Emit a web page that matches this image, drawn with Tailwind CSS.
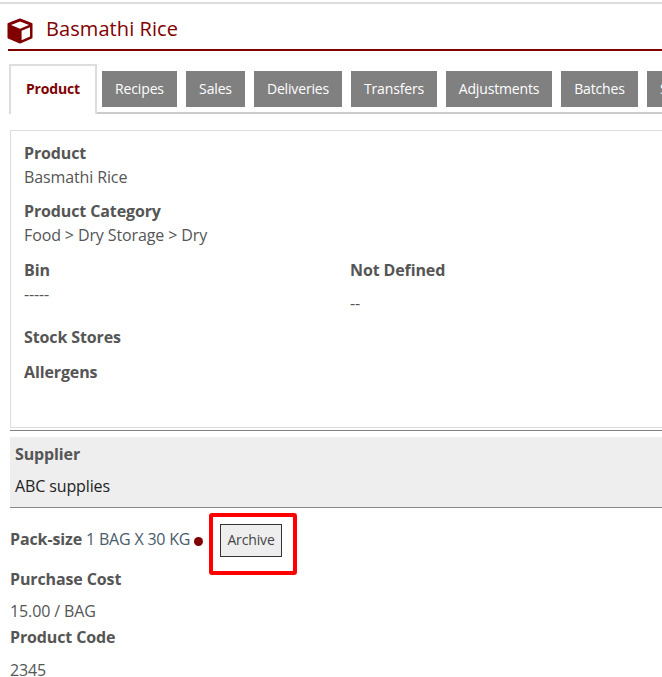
<!doctype html>
<html><head><meta charset="utf-8"><script src="https://cdn.jsdelivr.net/npm/@tailwindcss/browser@4"></script></head>
<body class="bg-white overflow-hidden">
<div class="w-[662px] h-[677px] overflow-hidden font-['Open_Sans',sans-serif] text-[16px] tracking-[-0.12px] text-[#555]">
  <div class="h-[4px] border-b-2 border-[#ddd]"></div>
  <div class="ml-[8px] h-[47px] border-b-2 border-[#800000] flex items-start text-[#800000]">
    <svg class="w-[26px] h-[26px] mt-[14px] -ml-[1px] shrink-0" viewBox="0 0 26 26"><path d="M13 1.5 L24.5 6 V19.5 L13 24.5 L1.5 19.5 V6 Z" fill="#800000" stroke="#800000" stroke-width="2" stroke-linejoin="round"/><path d="M13 3.4 L22 7 L13 10.8 L4 7 Z" fill="#fff"/><path d="M14.6 12.8 L23 9.2 V18.4 L14.6 22.2 Z" fill="#fff"/></svg>
    <span class="ml-[13px] mt-[10px] text-[20px] leading-[30px] tracking-[0.08px]">Basmathi Rice</span>
  </div>
  <div class="relative ml-[9px] mt-[13px] h-[50px] flex items-start whitespace-nowrap border-b-2 border-[#ccc] text-[14px] tracking-[-0.15px] leading-[20px]">
    <div class="h-[50px] w-[88px] shrink-0 bg-white border-2 border-b-0 border-[#ddd] -mb-[2px] pb-[3px] flex items-center justify-center font-bold text-[#800000]">Product</div>
    <div class="ml-[5px] mt-[7px] h-[36px] w-[75px] shrink-0 bg-[#808080] text-white pb-[1px] flex items-center justify-center">Recipes</div>
    <div class="ml-[9px] mt-[7px] h-[36px] w-[59px] shrink-0 bg-[#808080] text-white pb-[1px] flex items-center justify-center">Sales</div>
    <div class="ml-[9px] mt-[7px] h-[36px] w-[88px] shrink-0 bg-[#808080] text-white pb-[1px] flex items-center justify-center">Deliveries</div>
    <div class="ml-[9px] mt-[7px] h-[36px] w-[86px] shrink-0 bg-[#808080] text-white pb-[1px] flex items-center justify-center">Transfers</div>
    <div class="ml-[9px] mt-[7px] h-[36px] w-[106px] shrink-0 bg-[#808080] text-white pb-[1px] flex items-center justify-center">Adjustments</div>
    <div class="ml-[9px] mt-[7px] h-[36px] w-[77px] shrink-0 bg-[#808080] text-white pb-[1px] flex items-center justify-center">Batches</div>
    <div class="ml-[9px] mt-[7px] h-[36px] w-[60px] shrink-0 bg-[#808080] text-white pl-[13px] pb-[1px] flex items-center">Stock</div>
  </div>
  <div class="ml-[10px] mt-[16px] h-[298px] border border-r-0 border-[#ddd] pl-[13px] pt-[10px] leading-[24px]">
    <div class="font-bold">Product</div>
    <div>Basmathi Rice</div>
    <div class="font-bold mt-[10px]">Product Category</div>
    <div>Food &gt; Dry Storage &gt; Dry</div>
    <div class="mt-[11px] flex">
      <div class="w-[326px]"><div class="font-bold">Bin</div><div>-----</div></div>
      <div><div class="font-bold">Not Defined</div><div class="mt-[9px]">--</div></div>
    </div>
    <div class="font-bold mt-[10px]">Stock Stores</div>
    <div class="font-bold mt-[11px]">Allergens</div>
  </div>
  <div class="ml-[10px] mt-[2px] h-[1px] bg-[#808080]"></div>
  <div class="ml-[10px] mt-[6px] h-[70px] bg-[#eee] pl-[5px] pt-[5px] leading-[24px]">
    <div class="font-bold">Supplier</div>
    <div class="mt-[8px] text-[#222]">ABC supplies</div>
  </div>
  <div class="ml-[10px] h-[1px] bg-[#888]"></div>
  <div class="relative ml-[10px] h-[64px] pt-[19px] flex items-start leading-[24px]">
    <span class="font-bold">Pack-size</span><span class="ml-[4px] text-[#4a5b6b] tracking-[-0.2px]">1 BAG X 30 KG</span>
    <span class="w-[9px] h-[9px] rounded-full bg-[#800000] ml-[4px] mt-[10px]"></span>
    <div class="absolute left-[199px] top-[5px] w-[88px] h-[62px] border-[4px] border-[#ff0000] rounded-[3px]"></div>
    <button class="absolute left-[210px] top-[16px] w-[62px] h-[33px] border border-[#333] bg-[#eee] text-[14px] tracking-[-0.15px] pb-[2px] flex items-center justify-center text-[#444]">Archive</button>
  </div>
  <div class="ml-[10px] mt-[-5px] leading-[24px]">
    <div class="font-bold">Purchase Cost</div>
    <div class="mt-[8px]">15.00 / BAG</div>
    <div class="font-bold mt-[2px]">Product Code</div>
    <div class="mt-[9px]">2345</div>
  </div>
</div>
</body></html>
